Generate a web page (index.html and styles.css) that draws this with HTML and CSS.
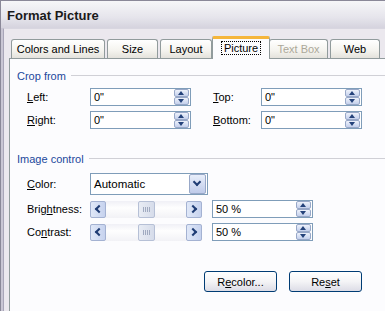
FILE: index.html
```html
<!DOCTYPE html>
<html>
<head>
    <title>Format Picture</title>
    <link rel="stylesheet" href="styles.css">
</head>
<body>
    <div class="window">
        <div class="titlebar">Format Picture</div>
        <div class="client">
            <div class="tabs">
                <div class="tab tab-colors">Colors and Lines</div>
                <div class="tab tab-size">Size</div>
                <div class="tab tab-layout">Layout</div>
                <div class="tab tab-picture active"><span class="focus">Picture</span></div>
                <div class="tab tab-textbox disabled">Text Box</div>
                <div class="tab tab-web">Web</div>
            </div>
            <div class="panel">
                <div class="group-title"><span>Crop from</span><span class="rule"></span></div>
                <div class="crop-grid">
                    <label><u>L</u>eft:</label>
                    <div class="spinbox"><span class="value">0"</span>
                        <div class="spin"><span class="spin-btn up"></span><span class="spin-btn down"></span></div>
                    </div>
                    <label class="col2"><u>T</u>op:</label>
                    <div class="spinbox"><span class="value">0"</span>
                        <div class="spin"><span class="spin-btn up"></span><span class="spin-btn down"></span></div>
                    </div>
                    <label><u>R</u>ight:</label>
                    <div class="spinbox"><span class="value">0"</span>
                        <div class="spin"><span class="spin-btn up"></span><span class="spin-btn down"></span></div>
                    </div>
                    <label class="col2"><u>B</u>ottom:</label>
                    <div class="spinbox"><span class="value">0"</span>
                        <div class="spin"><span class="spin-btn up"></span><span class="spin-btn down"></span></div>
                    </div>
                </div>

                <div class="group-title image-title"><span>Image control</span><span class="rule"></span></div>
                <div class="ctrl-grid">
                    <label><u>C</u>olor:</label>
                    <div class="combo"><span class="value">Automatic</span><span class="combo-btn"></span></div>
                    <span></span>

                    <label>Brig<u>h</u>tness:</label>
                    <div class="scrollbar">
                        <span class="sb-btn left"></span>
                        <div class="track"><span class="thumb"></span></div>
                        <span class="sb-btn right"></span>
                    </div>
                    <div class="spinbox"><span class="value">50 %</span>
                        <div class="spin"><span class="spin-btn up"></span><span class="spin-btn down"></span></div>
                    </div>

                    <label>Co<u>n</u>trast:</label>
                    <div class="scrollbar">
                        <span class="sb-btn left"></span>
                        <div class="track"><span class="thumb"></span></div>
                        <span class="sb-btn right"></span>
                    </div>
                    <div class="spinbox"><span class="value">50 %</span>
                        <div class="spin"><span class="spin-btn up"></span><span class="spin-btn down"></span></div>
                    </div>
                </div>

                <div class="actions">
                    <button class="xp-button">R<u>e</u>color...</button>
                    <button class="xp-button">Re<u>s</u>et</button>
                </div>
            </div>
        </div>
    </div>
</body>
</html>
```

FILE: styles.css
```css
body, html {
    margin: 0;
    overflow: hidden;
    background: #e9e6ec;
    font-family: "Liberation Sans", Arial, sans-serif;
    font-size: 11px;
    color: #000;
}

.window {
    width: 420px;
    height: 340px;
    border-top: 1px solid #8a8898;
    border-left: 1px solid #8a8898;
    background: #c9c6d4;
}

.titlebar {
    height: 27px;
    padding-left: 6px;
    line-height: 30px;
    font-size: 13px;
    font-weight: bold;
    color: #1a1a1a;
    background: linear-gradient(#f6f6f8, #e6e5ec 60%, #d5d3de);
}

.client {
    margin-left: 2px;
    border-left: 1px solid #a8a5b8;
    border-top: 1px solid #d8d6e0;
    background: #ebe8ee;
    padding: 6px 0 0 5px;
    height: 300px;
}

/* tabs */
.tabs {
    display: flex;
    align-items: flex-end;
    height: 23px;
    padding-left: 2px;
}

.tab {
    height: 19px;
    box-sizing: border-box;
    margin-right: 2px;
    border: 1px solid #919b9c;
    border-bottom: none;
    border-radius: 3px 3px 0 0;
    background: linear-gradient(#ffffff, #f4f3ee 60%, #e4e2dc);
    text-align: center;
    line-height: 18px;
    color: #000;
}

.tab-colors { width: 94px; }
.tab-size { width: 51px; }
.tab-layout { width: 52px; }
.tab-textbox { width: 59px; }
.tab-web { width: 50px; }

.tab.active {
    width: 58px;
    height: 23px;
    margin: 0 0 -1px -2px;
    position: relative;
    border-top: 3px solid #f5b63c;
    border-radius: 2px 2px 0 0;
    background: #fcfcfe;
    line-height: 18px;
}

.focus {
    outline: 1px dotted #000;
    padding: 0 2px;
}

.tab.disabled {
    color: #aca899;
    margin-left: -1px;
}

/* panel */
.panel {
    border: 1px solid #919b9c;
    border-right: none;
    background: #fcfcfe;
    padding: 10px 0 0 7px;
    height: 260px;
}

.group-title {
    display: flex;
    align-items: center;
    color: #22489c;
    height: 13px;
}

.group-title .rule {
    flex: 1;
    height: 1px;
    margin-left: 5px;
    background: #d0d0d6;
}

.image-title {
    margin-top: 23px;
}

.crop-grid {
    display: grid;
    grid-template-columns: 63px 101px 22px 48px 101px;
    grid-auto-rows: 18px;
    row-gap: 5px;
    margin: 6px 0 0 10px;
    align-items: center;
}

.crop-grid .col2 {
    grid-column: 4;
}

.ctrl-grid {
    display: grid;
    grid-template-columns: 63px 122px 101px;
    row-gap: 5px;
    margin: 8px 0 0 10px;
    align-items: center;
}

/* spin box */
.spinbox {
    box-sizing: border-box;
    width: 101px;
    height: 18px;
    border: 1px solid #7f9db9;
    background: #fff;
    display: flex;
    align-items: center;
    justify-content: space-between;
    padding: 0 1px 0 3px;
}

.spin {
    display: flex;
    flex-direction: column;
    width: 15px;
    height: 16px;
}

.spin-btn {
    flex: 1;
    box-sizing: border-box;
    border: 1px solid #98a8c8;
    border-radius: 2px;
    background: linear-gradient(#eef2fb, #c4d0ec);
    position: relative;
}

.spin-btn::after {
    content: "";
    position: absolute;
    left: 3px;
    top: 1px;
    border-left: 3.5px solid transparent;
    border-right: 3.5px solid transparent;
}

.spin-btn.up::after {
    border-bottom: 4px solid #24427a;
}

.spin-btn.down::after {
    border-top: 4px solid #24427a;
}

/* combo */
.combo {
    box-sizing: border-box;
    width: 118px;
    height: 22px;
    border: 1px solid #7f9db9;
    background: #fff;
    display: flex;
    align-items: center;
    justify-content: space-between;
    padding: 0 1px 0 3px;
    font-size: 11.5px;
}

.combo-btn {
    box-sizing: border-box;
    width: 17px;
    height: 20px;
    border: 1px solid #98a8c8;
    border-radius: 2px;
    background: linear-gradient(#e8eefa, #bfcbea);
    position: relative;
}

.combo-btn::after {
    content: "";
    position: absolute;
    left: 4px;
    top: 4px;
    width: 4px;
    height: 4px;
    border-right: 2px solid #1f3c74;
    border-bottom: 2px solid #1f3c74;
    transform: rotate(45deg);
}

/* scrollbar */
.scrollbar {
    display: flex;
    width: 112px;
    height: 17px;
    background: linear-gradient(#f0f0f6, #fefefe 40%, #f2f2f6);
}

.track {
    flex: 1;
    display: flex;
    justify-content: center;
}

.sb-btn, .thumb {
    box-sizing: border-box;
    width: 16px;
    height: 17px;
    border: 1px solid #a4b2d2;
    border-radius: 2px;
    background: linear-gradient(90deg, #e0e8f8, #c6d2ee);
    position: relative;
}

.sb-btn::after {
    content: "";
    position: absolute;
    top: 4px;
    width: 4px;
    height: 4px;
    border-left: 2px solid #1f3c74;
    border-bottom: 2px solid #1f3c74;
}

.sb-btn.left::after {
    left: 5px;
    transform: rotate(45deg);
}

.sb-btn.right::after {
    left: 3px;
    transform: rotate(-135deg);
}

.thumb {
    width: 17px;
    background: linear-gradient(90deg, #e8ecf4, #d6dcea);
    border-color: #b6c0d6;
}

.thumb::after {
    content: "";
    position: absolute;
    left: 4px;
    top: 5px;
    width: 7px;
    height: 5px;
    background: repeating-linear-gradient(90deg, #a0aac0 0 1px, transparent 1px 2px);
}

/* buttons */
.actions {
    display: flex;
    gap: 12px;
    margin: 30px 0 0 187px;
}

.xp-button {
    width: 73px;
    height: 21px;
    padding: 0;
    border: 1px solid #003c74;
    border-radius: 3px;
    background: linear-gradient(#ffffff, #f4f4f6 50%, #dcdce6);
    font-family: "Liberation Sans", Arial, sans-serif;
    font-size: 11px;
    color: #000;
}
```
